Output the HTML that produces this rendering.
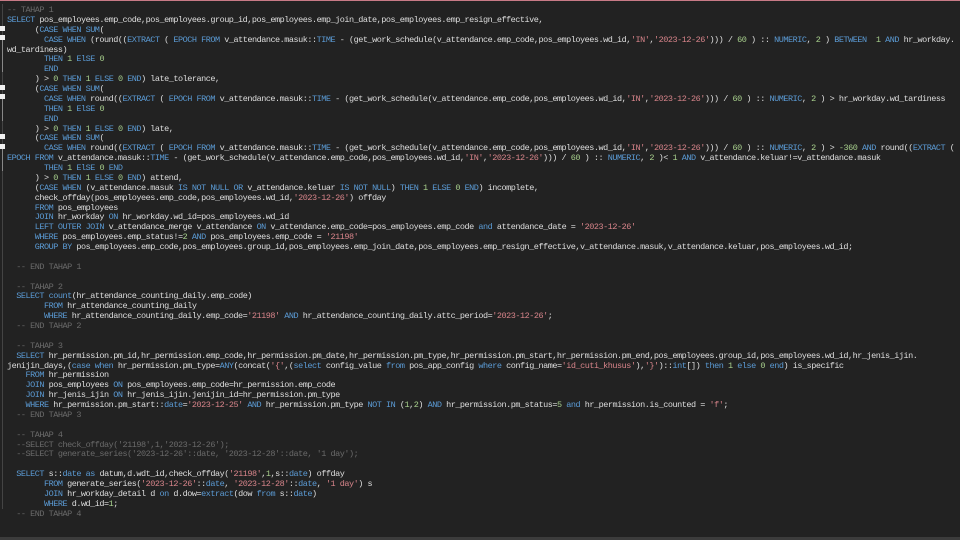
<!DOCTYPE html>
<html><head><meta charset="utf-8"><style>
html,body{margin:0;padding:0;width:960px;height:540px;overflow:hidden;background:#222222;}
#top{position:absolute;left:0;top:0;width:960px;height:1px;background:#c87a86;}
#bot{position:absolute;left:0;top:537px;width:960px;height:3px;background:#3c3c3c;}
#code{position:absolute;left:7px;top:6px;font-family:"Liberation Mono",monospace;font-size:8.5px;letter-spacing:-0.48px;color:#dedede;white-space:normal;}
#code div{height:9.88px;line-height:9.88px;white-space:pre;}
.k{color:#5b9bd5}.n{color:#a8d08d}.s{color:#d7848a}.c{color:#6a6a6a}
.fb{position:absolute;left:0;width:5px;height:5px;background:#f0f0f0;}
.fl{position:absolute;left:2px;width:1px;background:#888;}
</style></head><body>
<div id="top"></div>
<div class="fl" style="top:4px;height:505px;background:#444"></div>
<div class="fb" style="top:26px"></div><div class="fb" style="top:35px"></div>
<div class="fb" style="top:85px"></div><div class="fb" style="top:94px"></div>
<div class="fb" style="top:134px"></div><div class="fb" style="top:144px"></div>
<div class="fl" style="top:40px;height:32px"></div>
<div class="fl" style="top:99px;height:22px"></div>
<div class="fl" style="top:149px;height:22px"></div>
<div id="code"><div><span class="c">-- TAHAP 1</span></div><div><span class="k">SELECT</span> pos_employees.emp_code,pos_employees.group_id,pos_employees.emp_join_date,pos_employees.emp_resign_effective,</div><div>      (<span class="k">CASE WHEN SUM</span>(</div><div>        <span class="k">CASE WHEN</span> (round((<span class="k">EXTRACT</span> ( <span class="k">EPOCH FROM</span> v_attendance.masuk::<span class="k">TIME</span> - (get_work_schedule(v_attendance.emp_code,pos_employees.wd_id,<span class="s">'IN'</span>,<span class="s">'2023-12-26'</span>))) / <span class="n">60</span> ) :: <span class="k">NUMERIC</span>, <span class="n">2</span> ) <span class="k">BETWEEN</span>  <span class="n">1</span> <span class="k">AND</span> hr_workday.</div><div>wd_tardiness)</div><div>        <span class="k">THEN</span> <span class="n">1</span> <span class="k">ElSE</span> <span class="n">0</span></div><div>        <span class="k">END</span></div><div>      ) &gt; <span class="n">0</span> <span class="k">THEN</span> <span class="n">1</span> <span class="k">ELSE</span> <span class="n">0</span> <span class="k">END</span>) late_tolerance,</div><div>      (<span class="k">CASE WHEN SUM</span>(</div><div>        <span class="k">CASE WHEN</span> round((<span class="k">EXTRACT</span> ( <span class="k">EPOCH FROM</span> v_attendance.masuk::<span class="k">TIME</span> - (get_work_schedule(v_attendance.emp_code,pos_employees.wd_id,<span class="s">'IN'</span>,<span class="s">'2023-12-26'</span>))) / <span class="n">60</span> ) :: <span class="k">NUMERIC</span>, <span class="n">2</span> ) &gt; hr_workday.wd_tardiness</div><div>        <span class="k">THEN</span> <span class="n">1</span> <span class="k">ElSE</span> <span class="n">0</span></div><div>        <span class="k">END</span></div><div>      ) &gt; <span class="n">0</span> <span class="k">THEN</span> <span class="n">1</span> <span class="k">ELSE</span> <span class="n">0</span> <span class="k">END</span>) late,</div><div>      (<span class="k">CASE WHEN SUM</span>(</div><div>        <span class="k">CASE WHEN</span> round((<span class="k">EXTRACT</span> ( <span class="k">EPOCH FROM</span> v_attendance.masuk::<span class="k">TIME</span> - (get_work_schedule(v_attendance.emp_code,pos_employees.wd_id,<span class="s">'IN'</span>,<span class="s">'2023-12-26'</span>))) / <span class="n">60</span> ) :: <span class="k">NUMERIC</span>, <span class="n">2</span> ) &gt; <span class="n">-360</span> <span class="k">AND</span> round((<span class="k">EXTRACT</span> (</div><div><span class="k">EPOCH FROM</span> v_attendance.masuk::<span class="k">TIME</span> - (get_work_schedule(v_attendance.emp_code,pos_employees.wd_id,<span class="s">'IN'</span>,<span class="s">'2023-12-26'</span>))) / <span class="n">60</span> ) :: <span class="k">NUMERIC</span>, <span class="n">2</span> )&lt; <span class="n">1</span> <span class="k">AND</span> v_attendance.keluar!=v_attendance.masuk</div><div>        <span class="k">THEN</span> <span class="n">1</span> <span class="k">ElSE</span> <span class="n">0</span> <span class="k">END</span></div><div>      ) &gt; <span class="n">0</span> <span class="k">THEN</span> <span class="n">1</span> <span class="k">ELSE</span> <span class="n">0</span> <span class="k">END</span>) attend,</div><div>      (<span class="k">CASE WHEN</span> (v_attendance.masuk <span class="k">IS NOT NULL OR</span> v_attendance.keluar <span class="k">IS NOT NULL</span>) <span class="k">THEN</span> <span class="n">1</span> <span class="k">ELSE</span> <span class="n">0</span> <span class="k">END</span>) incomplete,</div><div>      check_offday(pos_employees.emp_code,pos_employees.wd_id,<span class="s">'2023-12-26'</span>) offday</div><div>      <span class="k">FROM</span> pos_employees</div><div>      <span class="k">JOIN</span> hr_workday <span class="k">ON</span> hr_workday.wd_id=pos_employees.wd_id</div><div>      <span class="k">LEFT OUTER JOIN</span> v_attendance_merge v_attendance <span class="k">ON</span> v_attendance.emp_code=pos_employees.emp_code <span class="k">and</span> attendance_date = <span class="s">'2023-12-26'</span></div><div>      <span class="k">WHERE</span> pos_employees.emp_status!=<span class="n">2</span> <span class="k">AND</span> pos_employees.emp_code = <span class="s">'21198'</span></div><div>      <span class="k">GROUP BY</span> pos_employees.emp_code,pos_employees.group_id,pos_employees.emp_join_date,pos_employees.emp_resign_effective,v_attendance.masuk,v_attendance.keluar,pos_employees.wd_id;</div><div> </div><div>  <span class="c">-- END TAHAP 1</span></div><div> </div><div>  <span class="c">-- TAHAP 2</span></div><div>  <span class="k">SELECT</span> <span class="k">count</span>(hr_attendance_counting_daily.emp_code)</div><div>        <span class="k">FROM</span> hr_attendance_counting_daily</div><div>        <span class="k">WHERE</span> hr_attendance_counting_daily.emp_code=<span class="s">'21198'</span> <span class="k">AND</span> hr_attendance_counting_daily.attc_period=<span class="s">'2023-12-26'</span>;</div><div>  <span class="c">-- END TAHAP 2</span></div><div> </div><div>  <span class="c">-- TAHAP 3</span></div><div>  <span class="k">SELECT</span> hr_permission.pm_id,hr_permission.emp_code,hr_permission.pm_date,hr_permission.pm_type,hr_permission.pm_start,hr_permission.pm_end,pos_employees.group_id,pos_employees.wd_id,hr_jenis_ijin.</div><div>jenijin_days,(<span class="k">case when</span> hr_permission.pm_type=<span class="k">ANY</span>(concat(<span class="s">'{'</span>,(<span class="k">select</span> config_value <span class="k">from</span> pos_app_config <span class="k">where</span> config_name=<span class="s">'id_cuti_khusus'</span>),<span class="s">'}'</span>)::<span class="k">int</span>[]) <span class="k">then</span> <span class="n">1</span> <span class="k">else</span> <span class="n">0</span> <span class="k">end</span>) is_specific</div><div>    <span class="k">FROM</span> hr_permission</div><div>    <span class="k">JOIN</span> pos_employees <span class="k">ON</span> pos_employees.emp_code=hr_permission.emp_code</div><div>    <span class="k">JOIN</span> hr_jenis_ijin <span class="k">ON</span> hr_jenis_ijin.jenijin_id=hr_permission.pm_type</div><div>    <span class="k">WHERE</span> hr_permission.pm_start::<span class="k">date</span>=<span class="s">'2023-12-25'</span> <span class="k">AND</span> hr_permission.pm_type <span class="k">NOT IN</span> (<span class="n">1</span>,<span class="n">2</span>) <span class="k">AND</span> hr_permission.pm_status=<span class="n">5</span> <span class="k">and</span> hr_permission.is_counted = <span class="s">'f'</span>;</div><div>  <span class="c">-- END TAHAP 3</span></div><div> </div><div>  <span class="c">-- TAHAP 4</span></div><div>  <span class="c">--SELECT check_offday('21198',1,'2023-12-26');</span></div><div>  <span class="c">--SELECT generate_series('2023-12-26'::date, '2023-12-28'::date, '1 day');</span></div><div> </div><div>  <span class="k">SELECT</span> s::<span class="k">date</span> <span class="k">as</span> datum,d.wdt_id,check_offday(<span class="s">'21198'</span>,<span class="n">1</span>,s::<span class="k">date</span>) offday</div><div>        <span class="k">FROM</span> generate_series(<span class="s">'2023-12-26'</span>::<span class="k">date</span>, <span class="s">'2023-12-28'</span>::<span class="k">date</span>, <span class="s">'1 day'</span>) s</div><div>        <span class="k">JOIN</span> hr_workday_detail d <span class="k">on</span> d.dow=<span class="k">extract</span>(dow <span class="k">from</span> s::<span class="k">date</span>)</div><div>        <span class="k">WHERE</span> d.wd_id=<span class="n">1</span>;</div><div>  <span class="c">-- END TAHAP 4</span></div></div>
<div id="bot"></div>
</body></html>
